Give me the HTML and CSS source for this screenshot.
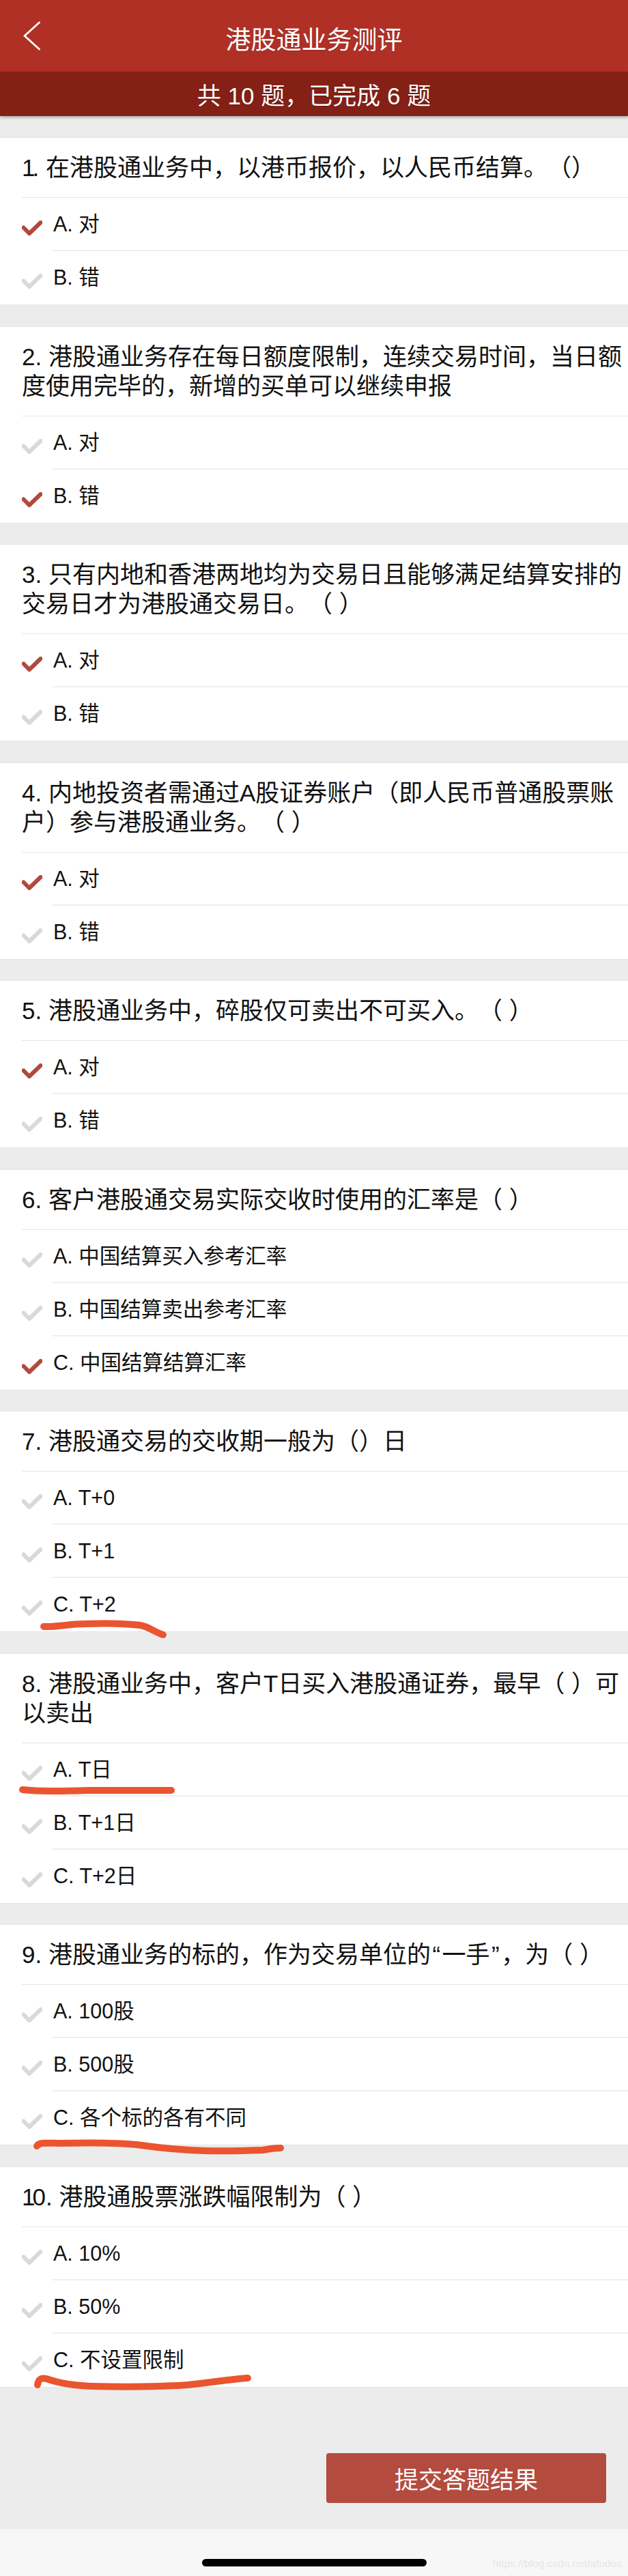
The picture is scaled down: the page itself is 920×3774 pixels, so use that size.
FILE: index.html
```html
<!DOCTYPE html>
<html lang="zh-CN">
<head>
<meta charset="utf-8">
<title>港股通业务测评</title>
<link rel="stylesheet" href="styles.css">
</head>
<body>
<svg width="0" height="0" class="defs">
  <defs>
    <symbol id="tick" viewBox="0 0 30 22">
      <path d="M2.5 10.5 L11 19 L27.5 3" fill="none" stroke="currentColor" stroke-width="6" stroke-linecap="round" stroke-linejoin="miter"/>
    </symbol>
  </defs>
</svg>
<div class="page">
  <header class="topbar">
    <svg class="back" width="26" height="44" viewBox="0 0 26 44"><path d="M23.5 2 L2 21.5 L23.5 41" fill="none" stroke="#fff" stroke-width="2.8" stroke-linecap="round" stroke-linejoin="miter"/></svg>
    <h1 class="title">港股通业务测评</h1>
  </header>
  <div class="progress">共 10 题，已完成 6 题</div>

  <main class="questions">
    <section class="card">
      <h2 class="q"><span class="one">1</span>. 在港股通业务中，以港币报价，以人民币结算。（）</h2>
      <div class="opt on"><svg class="ck"><use href="#tick"/></svg><span class="lbl">A. 对</span></div>
      <div class="opt"><svg class="ck"><use href="#tick"/></svg><span class="lbl">B. 错</span></div>
    </section>
    <section class="card">
      <h2 class="q">2. 港股通业务存在每日额度限制，连续交易时间，当日额度使用完毕的，新增的买单可以继续申报</h2>
      <div class="opt"><svg class="ck"><use href="#tick"/></svg><span class="lbl">A. 对</span></div>
      <div class="opt on"><svg class="ck"><use href="#tick"/></svg><span class="lbl">B. 错</span></div>
    </section>
    <section class="card">
      <h2 class="q">3. 只有内地和香港两地均为交易日且能够满足结算安排的交易日才为港股通交易日。（ ）</h2>
      <div class="opt on"><svg class="ck"><use href="#tick"/></svg><span class="lbl">A. 对</span></div>
      <div class="opt"><svg class="ck"><use href="#tick"/></svg><span class="lbl">B. 错</span></div>
    </section>
    <section class="card">
      <h2 class="q">4. 内地投资者需通过A股证券账户（即人民币普通股票账户）参与港股通业务。（ ）</h2>
      <div class="opt on"><svg class="ck"><use href="#tick"/></svg><span class="lbl">A. 对</span></div>
      <div class="opt"><svg class="ck"><use href="#tick"/></svg><span class="lbl">B. 错</span></div>
    </section>
    <section class="card">
      <h2 class="q">5. 港股通业务中，碎股仅可卖出不可买入。（ ）</h2>
      <div class="opt on"><svg class="ck"><use href="#tick"/></svg><span class="lbl">A. 对</span></div>
      <div class="opt"><svg class="ck"><use href="#tick"/></svg><span class="lbl">B. 错</span></div>
    </section>
    <section class="card">
      <h2 class="q">6. 客户港股通交易实际交收时使用的汇率是（ ）</h2>
      <div class="opt"><svg class="ck"><use href="#tick"/></svg><span class="lbl">A. 中国结算买入参考汇率</span></div>
      <div class="opt"><svg class="ck"><use href="#tick"/></svg><span class="lbl">B. 中国结算卖出参考汇率</span></div>
      <div class="opt on"><svg class="ck"><use href="#tick"/></svg><span class="lbl">C. 中国结算结算汇率</span></div>
    </section>
    <section class="card">
      <h2 class="q">7. 港股通交易的交收期一般为（）日</h2>
      <div class="opt"><svg class="ck"><use href="#tick"/></svg><span class="lbl">A. T+0</span></div>
      <div class="opt"><svg class="ck"><use href="#tick"/></svg><span class="lbl">B. T+1</span></div>
      <div class="opt"><svg class="ck"><use href="#tick"/></svg><span class="lbl">C. T+2</span></div>
    </section>
    <section class="card">
      <h2 class="q">8. 港股通业务中，客户T日买入港股通证券，最早（ ）可以卖出</h2>
      <div class="opt"><svg class="ck"><use href="#tick"/></svg><span class="lbl">A. T日</span></div>
      <div class="opt"><svg class="ck"><use href="#tick"/></svg><span class="lbl">B. T+1日</span></div>
      <div class="opt"><svg class="ck"><use href="#tick"/></svg><span class="lbl">C. T+2日</span></div>
    </section>
    <section class="card">
      <h2 class="q">9. 港股通业务的标的，作为交易单位的<span class="quote">“</span>一手<span class="quote">”</span>，为（ ）</h2>
      <div class="opt"><svg class="ck"><use href="#tick"/></svg><span class="lbl">A. 100股</span></div>
      <div class="opt"><svg class="ck"><use href="#tick"/></svg><span class="lbl">B. 500股</span></div>
      <div class="opt"><svg class="ck"><use href="#tick"/></svg><span class="lbl">C. 各个标的各有不同</span></div>
    </section>
    <section class="card">
      <h2 class="q"><span class="one">1</span>0. 港股通股票涨跌幅限制为（ ）</h2>
      <div class="opt"><svg class="ck"><use href="#tick"/></svg><span class="lbl">A. 10%</span></div>
      <div class="opt"><svg class="ck"><use href="#tick"/></svg><span class="lbl">B. 50%</span></div>
      <div class="opt"><svg class="ck"><use href="#tick"/></svg><span class="lbl">C. 不设置限制</span></div>
    </section>
  </main>

  <div class="actions"><button class="submit" type="button">提交答题结果</button></div>

  <footer class="homebar">
    <span class="indicator"></span>
    <span class="mark">https://blog.csdn.net/afudos</span>
  </footer>

  <svg class="scribbles" width="920" height="3774" viewBox="0 0 920 3774">
    <path d="M64 2383 C85 2384 100 2379 125 2379 C150 2378 180 2378 205 2381 C218 2383 226 2391 239 2395"/>
    <path d="M33 2622 C60 2625 90 2624 130 2623 C170 2623 210 2623 251 2623"/>
    <path d="M54 3144 C58 3138 68 3140 90 3140 C130 3139 170 3139 200 3142 C235 3147 265 3150 300 3151 C330 3152 360 3151 385 3150 C395 3148 405 3147 411 3147"/>
    <path d="M55 3494 C56 3486 60 3483 68 3485 C85 3491 105 3495 135 3496 C170 3497 230 3497 275 3494 C305 3491 335 3486 363 3484"/>
  </svg>
</div>
</body>
</html>
```

FILE: styles.css
```css
* { box-sizing: border-box; }
html, body { margin: 0; padding: 0; }
body {
  background: #ececec;
  font-family: "Liberation Sans", "Noto Sans CJK SC", sans-serif;
  color: #111;
  text-spacing-trim: space-all;
}
.defs { position: absolute; }
.page { position: relative; width: 920px; height: 3774px; display: flex; flex-direction: column; overflow: hidden; }

.topbar {
  height: 105px;
  background: #b03026;
  display: flex;
  align-items: center;
  justify-content: center;
  position: relative;
  flex: none;
}
.back { position: absolute; left: 34px; top: 31px; }
.title {
  margin: 6px 0 0;
  font-size: 37px;
  font-weight: 400;
  color: #fff;
  text-shadow: 0 1px 1px rgba(0,0,0,.2);
}
.progress {
  height: 65px;
  flex: none;
  background: #842015;
  color: #fff;
  font-size: 35px;
  display: flex;
  align-items: center;
  justify-content: center;
  box-shadow: 0 2px 4px rgba(0,0,0,.3);
  text-shadow: 0 1px 1px rgba(0,0,0,.3);
  position: relative;
}

.questions { display: flex; flex-direction: column; gap: 32.5px; padding-top: 32px; flex: none; }
.card { background: #fff; box-shadow: 0 0 0 1px #e6e6e6; }
.q {
  margin: 0 0 0 32px;
  padding: 22px 0 22px 0;
  font-size: 35px;
  line-height: 43px;
  font-weight: 400;
  border-bottom: 1px solid #e6e6e6;
}
.one { letter-spacing: -4px; }
.quote { margin: 0 2.5px; }
.opt {
  height: 78px;
  padding-left: 32px;
  display: flex;
  color: #d9d9d9;
}
.opt.on { color: #b04a3c; }
.ck { width: 30px; height: 22px; margin: 33px 15px 0 0; flex: none; }
.lbl {
  flex: 1;
  color: #111;
  font-size: 30.5px;
  line-height: 76px;
  border-bottom: 2px solid #eee;
  padding-left: 1px;
}
.opt:last-child .lbl { border-bottom: none; }

.actions { flex: none; display: flex; justify-content: flex-end; padding: 97px 32px 0; }
.submit {
  width: 410px;
  height: 73px;
  border: none;
  border-radius: 4px;
  background: #b34c3f;
  color: #fff;
  font: inherit;
  font-size: 35px;
}
.homebar {
  margin-top: auto;
  height: 69px;
  background: #f7f7f7;
  position: relative;
  display: flex;
  justify-content: center;
  flex: none;
}
.indicator { width: 329px; height: 11px; border-radius: 6px; background: #000; margin-top: 44px; }
.mark {
  position: absolute;
  right: 9px;
  top: 42px;
  font-size: 15.5px;
  line-height: 18px;
  color: #e6e6e6;
  font-family: "Liberation Sans", sans-serif;
}
.scribbles { position: absolute; left: 0; top: 0; pointer-events: none; }
.scribbles path { fill: none; stroke: #ea5530; stroke-width: 10; stroke-linecap: round; stroke-linejoin: round; }
```
